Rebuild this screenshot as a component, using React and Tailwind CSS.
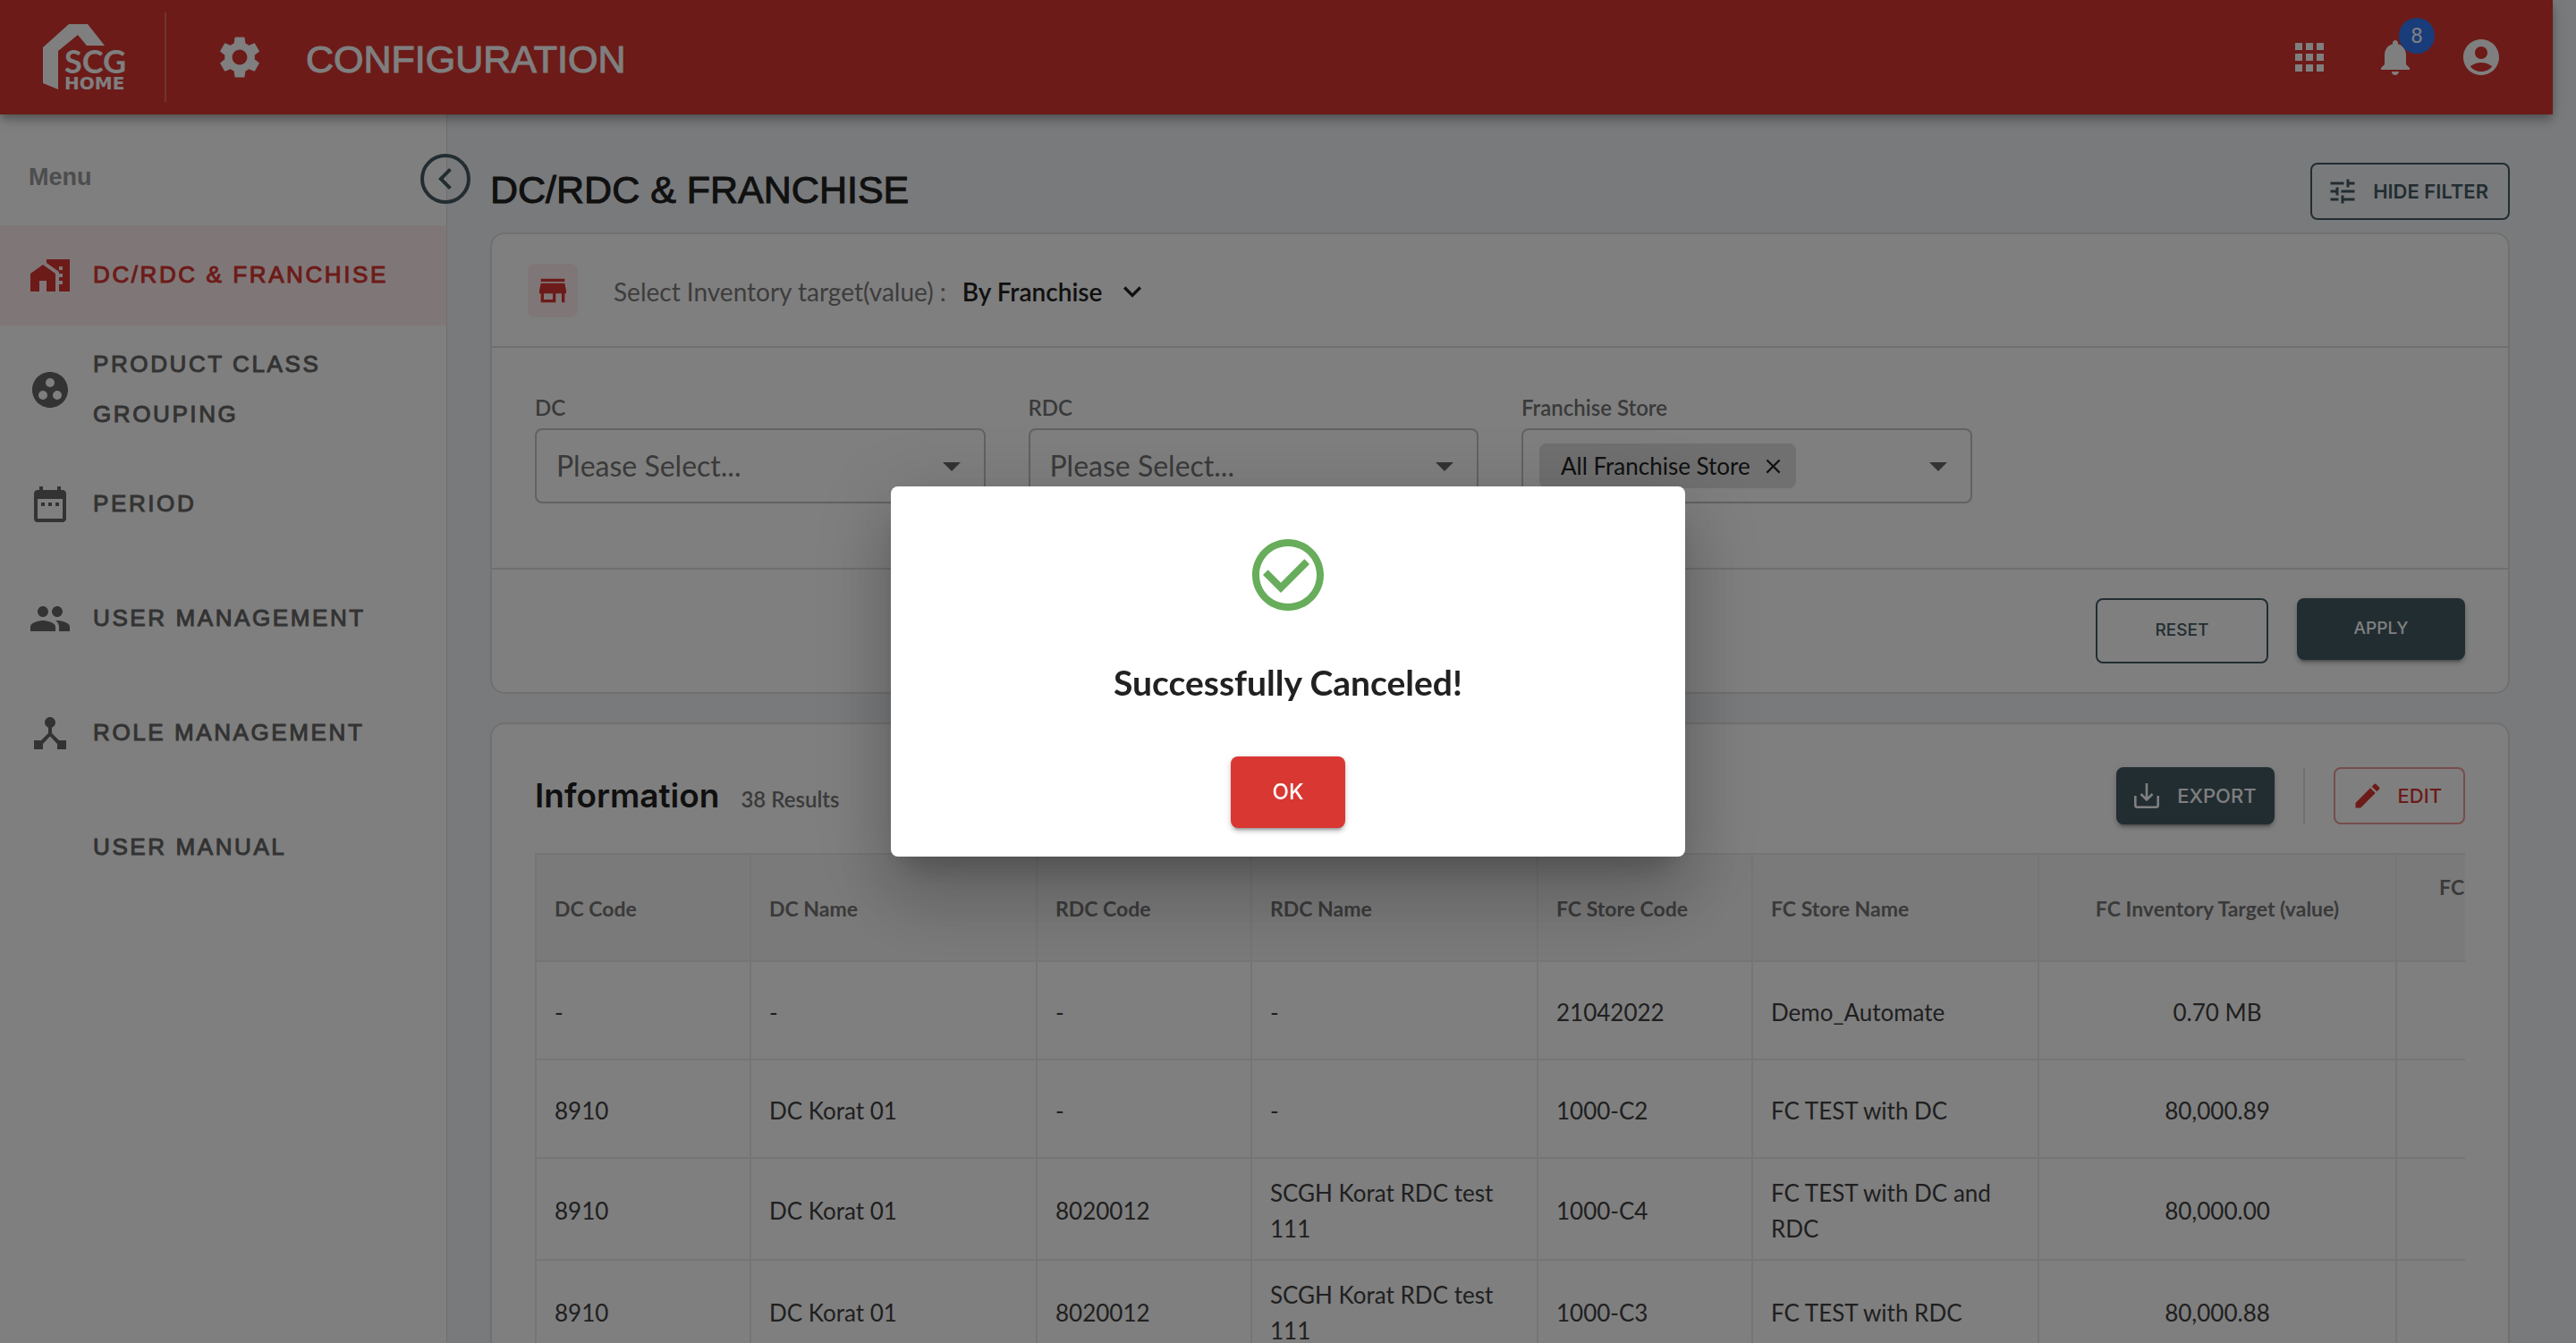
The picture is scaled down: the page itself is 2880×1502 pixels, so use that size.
import React from "react";
import {
  MdApps,
  MdNotifications,
  MdAccountCircle,
  MdSettings,
  MdHomeWork,
  MdGroupWork,
  MdDateRange,
  MdPeople,
  MdDeviceHub,
  MdChevronLeft,
  MdTune,
  MdStore,
  MdExpandMore,
  MdArrowDropDown,
  MdClose,
  MdEdit,
  MdCheckCircleOutline,
} from "react-icons/md";

const MENU = [
  { label: "DC/RDC & FRANCHISE", Icon: MdHomeWork, active: true },
  { label: "PRODUCT CLASS GROUPING", Icon: MdGroupWork },
  { label: "PERIOD", Icon: MdDateRange },
  { label: "USER MANAGEMENT", Icon: MdPeople },
  { label: "ROLE MANAGEMENT", Icon: MdDeviceHub },
  { label: "USER MANUAL" },
];

const ROWS = [
  ["-", "-", "-", "-", "21042022", "Demo_Automate", "0.70 MB", ""],
  ["8910", "DC Korat 01", "-", "-", "1000-C2", "FC TEST with DC", "80,000.89", ""],
  ["8910", "DC Korat 01", "8020012", "SCGH Korat RDC test 111", "1000-C4", "FC TEST with DC and RDC", "80,000.00", ""],
  ["8910", "DC Korat 01", "8020012", "SCGH Korat RDC test 111", "1000-C3", "FC TEST with RDC", "80,000.88", ""],
];

// Medium weight of the grotesque face: regular outlines thickened by a hairline.
const MEDIUM = "font-['Liberation_Sans',sans-serif] [-webkit-text-stroke:1px_currentColor]";

const BUTTON_SHADOW =
  "shadow-[0_6px_2px_-4px_rgba(0,0,0,0.2),0_4px_4px_0_rgba(0,0,0,0.14),0_2px_10px_0_rgba(0,0,0,0.12)]";

function Logo() {
  return (
    <svg width="96" height="74" viewBox="0 0 96 74" fill="white" role="img" aria-label="SCG Home" className="overflow-visible">
      <path d="M29 0H50L69 24H49L39 12L17 30V73L0 66V26Z" />
      <text x="24" y="55" fontFamily="Lato, sans-serif" fontWeight="700" fontSize="36">SCG</text>
      <text x="24" y="73" fontFamily="'DejaVu Sans', sans-serif" fontWeight="700" fontSize="20">HOME</text>
    </svg>
  );
}

function ExportIcon() {
  return (
    <svg width="28" height="28" viewBox="0 0 28 28" fill="none" stroke="currentColor" strokeWidth="2.6">
      <path d="M14 0V18M7.5 12L14 18.5L20.5 12M1.3 14V24.5Q1.3 26.7 3.5 26.7H24.5Q26.7 26.7 26.7 24.5V14" />
    </svg>
  );
}

function Header() {
  return (
    <header className="relative z-10 flex h-32 shrink-0 items-center bg-[#d93732] pl-12 pr-8 text-white shadow-[0_4px_8px_-2px_rgba(0,0,0,0.2),0_8px_10px_0_rgba(0,0,0,0.14),0_2px_20px_0_rgba(0,0,0,0.12)]">
      <Logo />
      <div className="ml-10 h-[100px] w-0.5 bg-white/25" />
      <MdSettings className="ml-[54px] size-14" />
      <h1 className={`ml-[46px] pt-1 text-[43px] leading-[60px] ${MEDIUM}`}>CONFIGURATION</h1>
      <div className="ml-auto flex">
        <button aria-label="Applications" className="p-6"><MdApps className="size-12" /></button>
        <button aria-label="Notifications" className="relative p-6">
          <MdNotifications className="size-12" />
          <span className="absolute right-1 top-1 flex size-10 items-center justify-center rounded-full bg-[#3279f5] font-['Roboto',sans-serif] text-[24px] leading-none">8</span>
        </button>
        <button aria-label="Account" className="p-6"><MdAccountCircle className="size-12" /></button>
      </div>
    </header>
  );
}

function Sidebar() {
  return (
    <aside className="relative w-[500px] shrink-0 border-r border-[#dedede] bg-white pt-[52px]">
      <h2 className="pl-8 font-['Liberation_Sans',sans-serif] text-[27px] font-bold leading-9 text-[#9a9a9a]">Menu</h2>
      <button
        aria-label="Collapse menu"
        className="absolute -right-[27px] top-11 flex size-14 items-center justify-center rounded-full border-4 border-[#455a64] text-[#455a64]"
      >
        <MdChevronLeft className="size-12 shrink-0" />
      </button>
      <nav className="mt-9 flex flex-col gap-4">
        {MENU.map(({ label, Icon, active }) => (
          <a
            key={label}
            href="#"
            className={`flex h-28 items-center gap-6 pl-8 pr-12 text-[26px] leading-14 tracking-widest ${MEDIUM} ${
              active ? "bg-[#ffeeee] text-[#d93732]" : "text-[#666666]"
            }`}
          >
            <span className="size-12 shrink-0">{Icon && <Icon className="size-12" />}</span>
            <span className="pb-0.5">{label}</span>
          </a>
        ))}
      </nav>
    </aside>
  );
}

function SelectField({ id, label }) {
  return (
    <div>
      <label htmlFor={id} className="block text-[24px] font-semibold leading-[30px] text-[#757575]">{label}</label>
      <div className="relative mt-2">
        <select
          id={id}
          defaultValue=""
          className="h-[84px] w-full appearance-none rounded-lg border-2 border-[#c4c4c4] bg-white pl-[22px] pr-16 text-[32px] text-[#757575]"
        >
          <option value="">Please Select...</option>
        </select>
        <MdArrowDropDown className="pointer-events-none absolute right-3.5 top-[18px] size-12 text-[#666666]" />
      </div>
    </div>
  );
}

function FilterCard() {
  return (
    <section className="rounded-2xl border-2 border-[#e0e0e0] bg-white">
      <div className="flex h-[125px] items-center pl-10">
        <span className="flex h-[60px] w-14 items-center justify-center rounded-lg bg-[#ffeeee] text-[#d93732]">
          <MdStore className="size-10" />
        </span>
        <span className="ml-10 pt-0.5 text-[28px] text-[#7a7a7a]">Select Inventory target(value) :</span>
        <button className="ml-[18px] flex items-center gap-3.5 pt-0.5 text-[28px] font-semibold text-[#212121]">
          By Franchise
          <MdExpandMore className="size-10" />
        </button>
      </div>
      <div className="grid grid-cols-4 gap-12 border-y-2 border-[#e0e0e0] px-12 pb-[72px] pt-[52px]">
        <SelectField id="dc" label="DC" />
        <SelectField id="rdc" label="RDC" />
        <div>
          <label htmlFor="store" className="block text-[24px] font-semibold leading-[30px] text-[#757575]">Franchise Store</label>
          <div className="mt-2 flex h-[84px] items-center rounded-lg border-2 border-[#c4c4c4] pl-[18px] pr-3">
            <span className="flex h-[50px] shrink-0 items-center gap-3 rounded-lg bg-[#e0e0e0] pl-6 pr-3 text-[26px] text-[#212121]">
              All Franchise Store
              <button aria-label="Remove All Franchise Store"><MdClose className="size-[27px]" /></button>
            </span>
            <input id="store" type="text" className="min-w-0 flex-1 px-2 text-[26px] outline-none" />
            <button aria-label="Open store list"><MdArrowDropDown className="size-12 text-[#666666]" /></button>
          </div>
        </div>
      </div>
      <div className="flex items-start justify-end gap-8 px-12 py-8 font-['Inter',sans-serif] text-[19px] font-medium">
        <button className="h-[73px] w-[193px] rounded-lg border-2 border-[#455a64] text-[#455a64]">RESET</button>
        <button className={`h-[69px] w-[188px] rounded-lg bg-[#455a64] text-white ${BUTTON_SHADOW}`}>APPLY</button>
      </div>
    </section>
  );
}

const COLUMNS = [
  ["DC Code", "w-[240px]"],
  ["DC Name", "w-[320px]"],
  ["RDC Code", "w-[240px]"],
  ["RDC Name", "w-[320px]"],
  ["FC Store Code", "w-[240px]"],
  ["FC Store Name", "w-[320px]"],
  ["FC Inventory Target (value)", "w-[400px]"],
  ["FC Inventory Target (quantity) (Piece)", "w-[400px]"],
];

function InfoCard() {
  return (
    <section className="mt-8 rounded-2xl border-2 border-[#e0e0e0] bg-white px-12 pt-12">
      <div className="flex h-16 items-center">
        <div className="flex items-baseline gap-6">
          <h3 className="font-['Inter',sans-serif] text-[37px] font-semibold text-[#212121]">Information</h3>
          <span className="text-[24px] font-semibold text-[#757575]">38 Results</span>
        </div>
        <div className="ml-auto flex h-16 font-['Inter',sans-serif] text-[22px] font-medium">
          <button className={`flex items-center gap-5 rounded-lg bg-[#455a64] px-5 text-white ${BUTTON_SHADOW}`}>
            <ExportIcon />
            EXPORT
          </button>
          <div className="mx-8 w-0.5 bg-[#e0e0e0]" />
          <button className="flex items-center gap-4 rounded-lg border-2 border-[#d93732]/50 pl-[18px] pr-6 text-[#d93732]">
            <MdEdit className="size-9" />
            EDIT
          </button>
        </div>
      </div>
      <div className="mt-8 overflow-hidden">
        <table className="w-[2480px] table-fixed border-collapse">
          <thead>
            <tr className="h-[120px] bg-[#f5f5f5] text-[23px] leading-[48px] text-[#757575]">
              {COLUMNS.map(([label, width], i) => (
                <th key={label} className={`${width} border-2 border-[#ebebeb] px-5 pt-0.5 font-bold ${i > 5 ? "text-center" : "text-left"}`}>
                  {label}
                </th>
              ))}
            </tr>
          </thead>
          <tbody className="text-[26px] leading-10 text-[#404040]">
            {ROWS.map((row, r) => (
              <tr key={r} className="h-[110px]">
                {row.map((cell, i) => (
                  <td key={i} className={`border-2 border-[#ebebeb] px-5 pb-3.5 pt-[18px] ${i > 5 ? "text-center" : "text-left"}`}>
                    {cell}
                  </td>
                ))}
              </tr>
            ))}
          </tbody>
        </table>
      </div>
    </section>
  );
}

function SuccessDialog() {
  return (
    <div className="fixed inset-0 z-20 flex items-center justify-center bg-black/50">
      <div
        role="dialog"
        aria-modal="true"
        aria-labelledby="dialog-title"
        className="flex w-[888px] flex-col items-center rounded-lg bg-white pb-8 pt-[51px] shadow-[0_22px_30px_-14px_rgba(0,0,0,0.2),0_48px_76px_6px_rgba(0,0,0,0.14),0_18px_92px_16px_rgba(0,0,0,0.12)]"
      >
        <MdCheckCircleOutline className="size-24 text-[#67ad5b]" />
        <h2 id="dialog-title" className="mt-11 text-[39px] font-bold leading-14 text-[#212121]">Successfully Canceled!</h2>
        <button className={`mt-[55px] h-20 w-32 rounded-lg bg-[#d93732] font-['Inter',sans-serif] text-[24px] font-medium text-white ${BUTTON_SHADOW}`}>
          OK
        </button>
      </div>
    </div>
  );
}

export default function App() {
  return (
    <div className="flex h-screen flex-col overflow-hidden bg-[#f2f5f9] pr-[26px] font-['Lato',sans-serif]">
      <Header />
      <div className="flex min-h-0 flex-1">
        <Sidebar />
        <main className="min-w-0 flex-1 px-12 pt-[54px]">
          <div className="mb-3.5 flex h-16 items-center justify-between">
            <h2 className={`pb-1 text-[43px] leading-[60px] text-[#212121] ${MEDIUM}`}>DC/RDC &amp; FRANCHISE</h2>
            <button className="flex h-16 items-center gap-4 rounded-lg border-2 border-[#455a64] pl-4 pr-[22px] font-['Inter',sans-serif] text-[22px] font-semibold text-[#455a64]">
              <MdTune className="size-9" />
              HIDE FILTER
            </button>
          </div>
          <FilterCard />
          <InfoCard />
        </main>
      </div>
      <SuccessDialog />
    </div>
  );
}
